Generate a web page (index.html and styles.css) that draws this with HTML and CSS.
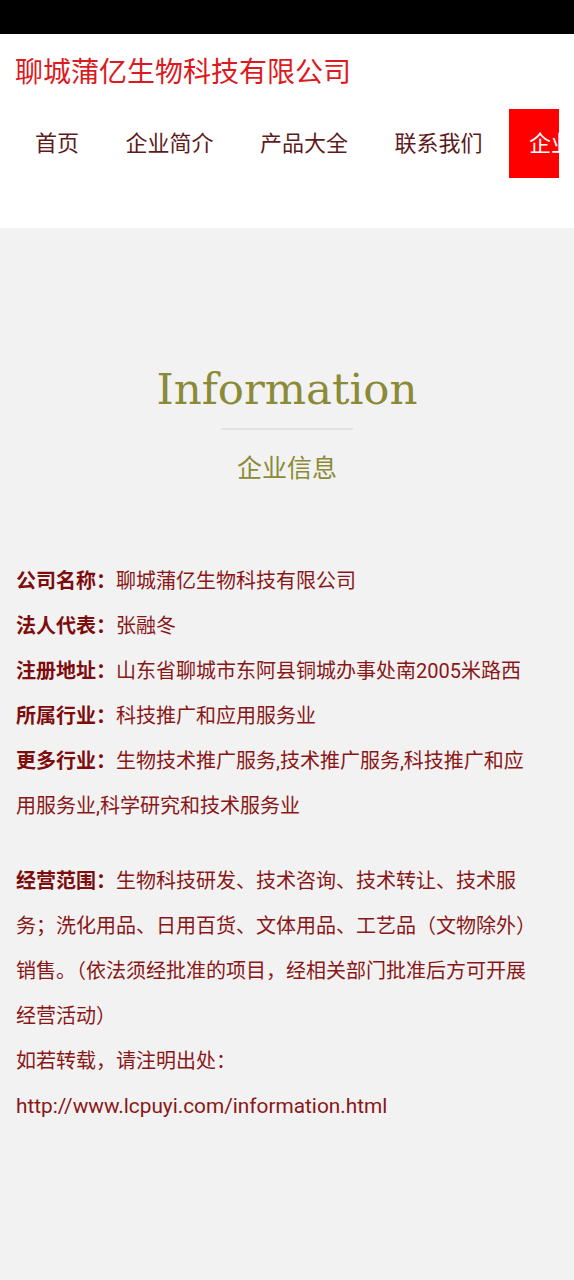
FILE: index.html
```html
<!DOCTYPE html>
<html lang="zh-CN">
<head>
<meta charset="utf-8">
<meta name="viewport" content="width=device-width, initial-scale=1">
<title>企业信息 - 聊城蒲亿生物科技有限公司</title>
<link rel="stylesheet" href="styles.css">
</head>
<body>
<div class="statusbar"></div>
<header class="header">
  <div class="logo">聊城蒲亿生物科技有限公司</div>
  <nav class="nav">
    <a class="nav-item" href="#">首页</a>
    <a class="nav-item" href="#">企业简介</a>
    <a class="nav-item" href="#">产品大全</a>
    <a class="nav-item" href="#">联系我们</a>
    <a class="nav-item active" href="#">企业信息</a>
  </nav>
</header>
<main class="main">
  <div class="heading">
    <h1 class="heading-en">Information</h1>
    <div class="heading-line"></div>
    <h2 class="heading-cn">企业信息</h2>
  </div>
  <div class="info">
    <div class="group">
      <p class="row"><b class="label">公司名称：</b>聊城蒲亿生物科技有限公司</p>
      <p class="row"><b class="label">法人代表：</b>张融冬</p>
      <p class="row"><b class="label">注册地址：</b>山东省聊城市东阿县铜城办事处南2005米路西</p>
      <p class="row"><b class="label">所属行业：</b>科技推广和应用服务业</p>
      <p class="row"><b class="label">更多行业：</b>生物技术推广服务,技术推广服务,科技推广和应用服务业,科学研究和技术服务业</p>
    </div>
    <div class="group scope">
      <p class="row"><b class="label">经营范围：</b>生物科技研发、技术咨询、技术转让、技术服务；洗化用品、日用百货、文体用品、工艺品（文物除外）销售。（依法须经批准的项目，经相关部门批准后方可开展经营活动）</p>
      <p class="row">如若转载，请注明出处：</p>
      <p class="row url">http://www.lcpuyi.com/information.html</p>
    </div>
  </div>
</main>
</body>
</html>
```

FILE: styles.css
```css
* {
  box-sizing: border-box;
}

html, body {
  margin: 0;
  padding: 0;
}

body {
  background: #f2f2f2;
  font-family: "Roboto", "Noto Sans CJK SC", sans-serif;
  min-height: 1280px;
}

.statusbar {
  height: 34px;
  background: #000;
}

.header {
  background: #fff;
  padding: 19px 15px 50px;
}

.logo {
  font-size: 28px;
  line-height: 40px;
  color: #dc1a1f;
  white-space: nowrap;
}

.nav {
  margin-top: 16px;
  display: flex;
  white-space: nowrap;
  overflow: hidden;
}

.nav-item {
  flex: none;
  display: block;
  padding: 0 20px;
  margin-right: 6.5px;
  height: 69px;
  line-height: 69px;
  font-size: 22px;
  color: #5e1b1b;
  text-decoration: none;
}

.nav-item.active {
  background: #ff0000;
  color: #fff;
}

.main {
  padding: 131px 0 0;
}

.heading {
  display: flex;
  flex-direction: column;
  align-items: center;
}

.heading-en {
  margin: 0;
  font-family: "DejaVu Serif", "Liberation Serif", serif;
  font-weight: normal;
  font-size: 43.5px;
  line-height: 60px;
  color: #8b8a36;
}

.heading-line {
  margin-top: 9px;
  width: 132px;
  height: 2px;
  background: #e3e3e3;
}

.heading-cn {
  margin: 21px 0 0;
  font-weight: normal;
  font-size: 25px;
  line-height: 36px;
  color: #8b8a36;
}

.info {
  padding: 72px 34px 0 16px;
}

.group {
  margin: 0;
}

.scope {
  margin-top: 30px;
}

.row {
  margin: 0;
  font-size: 20px;
  line-height: 45px;
  color: #8a1717;
}

.row.url {
  font-size: 20.8px;
}

.label {
  font-weight: bold;
  color: #7d0d0d;
}
```
